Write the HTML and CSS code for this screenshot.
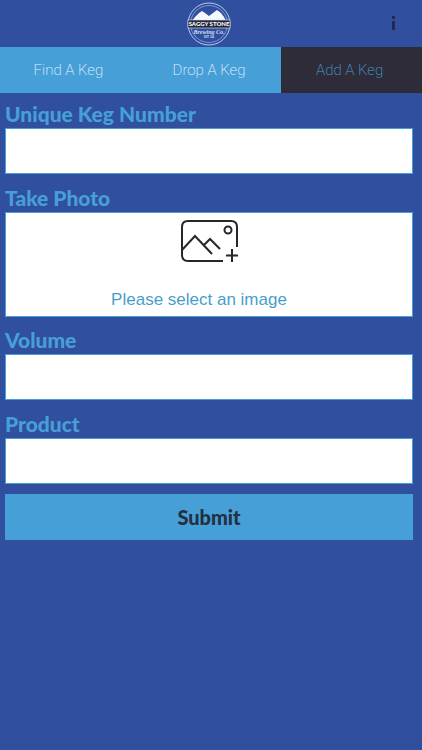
FILE: index.html
```html
<!DOCTYPE html>
<html lang="en">
<head>
  <meta charset="UTF-8" />
  <title>Add A Keg</title>
  <meta name="viewport" content="width=device-width, initial-scale=1.0" />
  <link rel="stylesheet" href="styles.css">
</head>
<body>

  <header class="topbar">
    <svg class="logo" viewBox="0 0 44 44" role="img" aria-label="Saggy Stone Brewing Co.">
      <circle cx="22" cy="22" r="21" fill="none" stroke="#b9c8ea" stroke-width="1" />
      <circle cx="22" cy="22" r="18.5" fill="none" stroke="#8fa5d8" stroke-width="0.8" />
      <!-- hills -->
      <path d="M5 19 L8 15 L12 11 L15 9 L18 11 L22 14 L26 11 L30 8 L34 11 L37 15 L39 19 Z" fill="#f4f7fc" />
      <rect x="1" y="18" width="42" height="8" fill="#24283a" stroke="#dfe6f5" stroke-width="0.6" />
      <text class="logo-name" x="22" y="24" text-anchor="middle">SAGGY STONE</text>
      <text class="logo-script" x="22" y="32" text-anchor="middle">Brewing Co.</text>
      <text class="logo-est" x="22" y="36" text-anchor="middle">EST. SA</text>
    </svg>
    <button type="button" class="info-btn" aria-label="Information">
      <svg width="6" height="16" viewBox="0 0 6 16">
        <rect x="2" y="0" width="3" height="3" fill="#252a4a" />
        <rect x="2" y="5" width="3" height="9" fill="#252a4a" />
      </svg>
    </button>
  </header>

  <nav class="tabs">
    <a href="#find">Find A Keg</a>
    <a href="#drop">Drop A Keg</a>
    <a href="#add" class="active">Add A Keg</a>
  </nav>

  <main>
    <form class="keg-form">
      <label for="keg-number">Unique Keg Number</label>
      <input type="text" id="keg-number" />

      <label for="photo">Take Photo</label>
      <button type="button" id="photo" class="photo-btn">
        <svg width="58" height="44" viewBox="0 0 58 44" fill="none" stroke="#26262c" stroke-width="2">
          <path d="M43 41 H8 Q2 41 2 35 V7 Q2 1 8 1 H51 Q57 1 57 7 V27" />
          <path d="M2 30 L15 16 L32 34 M24 25 L30 19 L40 29" />
          <circle cx="48" cy="10" r="3.5" />
          <path d="M52 29 V42 M46 35.5 H58" />
        </svg>
        <span>Please select an image</span>
      </button>

      <label for="volume">Volume</label>
      <input type="text" id="volume" />

      <label for="product">Product</label>
      <input type="text" id="product" />

      <button type="submit" class="submit-btn">Submit</button>
    </form>
  </main>

</body>
</html>
```
FILE: styles.css
```css
* {
  box-sizing: border-box;
}

body {
  margin: 0;
  background-color: #314f9f;
  font-family: Lato, sans-serif;
}

.topbar {
  display: grid;
  grid-template-columns: 1fr 44px 1fr;
  align-items: center;
  height: 47px;
  padding-right: 4px;
}

.logo {
  display: block;
  grid-column: 2;
  width: 44px;
  height: 44px;
}

.logo-name {
  font: 900 6px Lato, sans-serif;
  fill: #ffffff;
}

.logo-script {
  font: italic bold 6px "Liberation Serif", serif;
  fill: #d5dff3;
}

.logo-est {
  font: bold 3px Lato, sans-serif;
  fill: #d5dff3;
}

.info-btn {
  grid-column: 3;
  justify-self: end;
  display: flex;
  padding: 14px 22px;
  border: none;
  background: none;
  cursor: pointer;
}

.tabs {
  display: grid;
  grid-template-columns: repeat(3, 1fr);
}

.tabs a {
  padding-right: 4px;
  background-color: #479fd8;
  color: #e3f3fb;
  font-family: Roboto, sans-serif;
  font-size: 15px;
  font-weight: 200;
  line-height: 46px;
  text-align: center;
  text-decoration: none;
}

.tabs a.active {
  background-color: #2e2c38;
  color: #479fd8;
}

.keg-form {
  display: flex;
  flex-direction: column;
  padding: 0 9px 10px 5px;
}

.keg-form label {
  padding-top: 10px;
  color: #479fd8;
  font-size: 21px;
  font-weight: 900;
  line-height: 28px;
}

.keg-form label:first-child {
  padding-top: 7px;
}

.keg-form input {
  height: 46px;
  padding: 0 10px;
  border: 1px solid #479fd8;
  border-radius: 0;
  background-color: #ffffff;
  font-size: 18px;
}

.photo-btn {
  display: flex;
  flex-direction: column;
  align-items: center;
  gap: 25px;
  padding: 7px 0 5px;
  border: 1px solid #479fd8;
  background-color: #ffffff;
  color: #479fc8;
  font-family: "Liberation Sans", Arial, sans-serif;
  font-size: 17px;
  line-height: 22px;
  cursor: pointer;
}

.photo-btn span {
  padding-right: 20px;
}

.photo-btn + label {
  padding-top: 9px;
}

.submit-btn {
  height: 46px;
  margin-top: 10px;
  border: none;
  background-color: #479fd8;
  color: #22303f;
  font-family: Lato, sans-serif;
  font-size: 20px;
  font-weight: 900;
  cursor: pointer;
}
```
